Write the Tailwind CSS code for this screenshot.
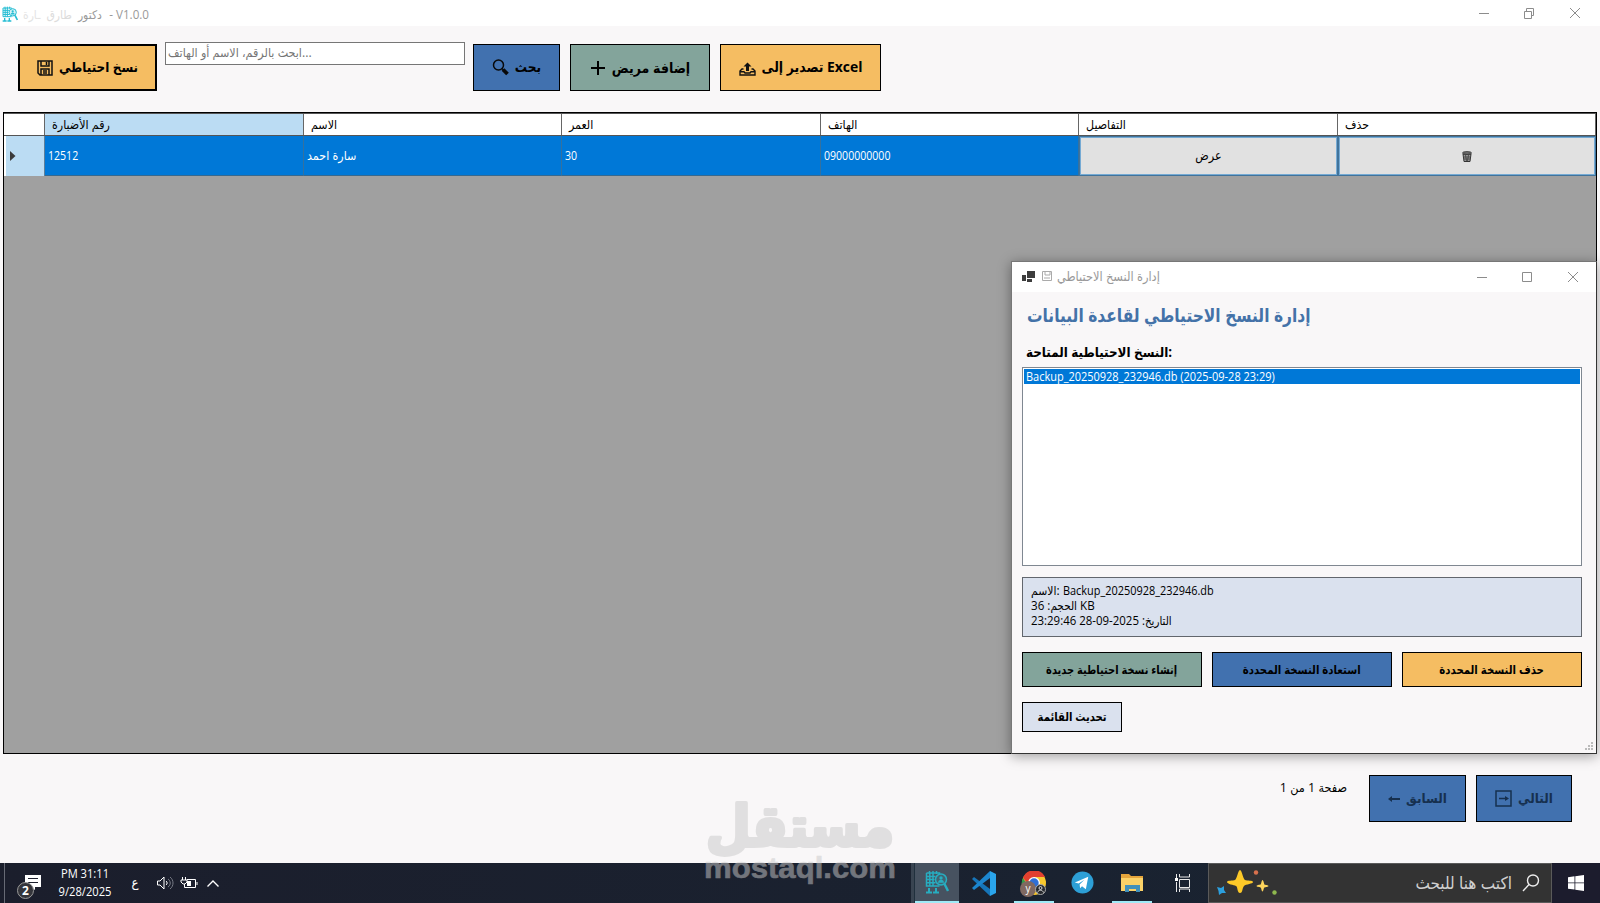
<!DOCTYPE html>
<html lang="ar" dir="ltr">
	<head>
		<meta charset="utf-8" />
		<meta name="viewport" content="width=device-width, initial-scale=1" />
		<script src="https://cdn.jsdelivr.net/npm/@tailwindcss/browser@4"></script>
		<title>V1.0.0</title>
	</head>

	<body
		class="relative flex h-[903px] w-[1600px] flex-col overflow-hidden bg-[#f9f7f8] font-['Open_Sans','DejaVu_Sans_Condensed','DejaVu_Sans',sans-serif] text-[12px] text-black"
	>
		<!-- clinic icon, shared by title bar and taskbar -->
		<svg class="hidden">
			<symbol id="clinic" viewBox="0 0 24 24">
				<path d="M1.500 3h13v1M1.500 3v13h13M4.500 1v3M8 1v3M11.500 1v3M1.500 6.500h9M1.500 9.500h8M1.500 12.700h9M4.800 3v13M8 3v13" fill="none" stroke="currentColor" stroke-width="1.500" />
				<circle cx="16" cy="9.500" r="5.500" fill="currentColor" fill-opacity=".2" stroke="currentColor" stroke-width="1.500" />
				<circle cx="16" cy="8" r="1.700" fill="currentColor" />
				<path d="M13 12.800c0-4 6-4 6 0z" fill="currentColor" />
				<path d="M19.500 14l3.500 7" stroke="currentColor" stroke-width="2.400" />
				<path d="M4 18v4M11 18v4M1 22.500h6M8 22.500h6" stroke="currentColor" stroke-width="2" />
			</symbol>
		</svg>

		<header class="flex h-[26px] shrink-0 items-center bg-white pl-[2px] text-[#999]">
			<svg class="mt-[2px] size-4 text-[#25bdd3]"><use href="#clinic" /></svg>
			<div class="ml-[5px] flex w-[126px] items-center justify-between whitespace-nowrap pt-[3px] text-[12px]">
				<span class="text-[#e4e4e4]">ـارة</span>
				<span class="text-[#dcdcdc]">طارق</span>
				<span>دكتور</span>
				<span class="origin-right scale-x-[.97]">- V1.0.0</span>
			</div>
			<svg class="ml-auto mr-[19px] h-3 w-[102px]" fill="none" stroke="#8c8c8c">
				<path d="M0 6.500h10M45.500 4.500h7v7h-7zM47.500 4V1.500h7v7H53M91 1l10 10M101 1L91 11" />
			</svg>
		</header>

		<section class="flex h-[86px] shrink-0 items-start pl-[18px] pt-4 text-[14px] font-bold">
			<button class="mt-[2px] flex h-[47px] w-[139px] items-center justify-center gap-[6px] border-2 border-black bg-[#f5bd62] text-[13.300px]">
				<svg class="size-4" viewBox="0 0 16 16" fill="none" stroke="#111" stroke-width="1.500">
					<path d="M1 1h14v14H3l-2-2zM4 1v5h8V1M4 15V9h8v6M6 11h4M6 13h4M9.500 2v3" />
				</svg>
				<span class="whitespace-nowrap">نسخ احتياطي</span>
			</button>
			<div class="ml-2 h-[23px] w-[300px] whitespace-nowrap border border-[#767676] bg-white pl-[2px] text-[12.400px] font-normal leading-[20px] text-[#757575]">
				ابحث بالرقم، الاسم أو الهاتف...
			</div>
			<button class="ml-2 mt-[2px] flex h-[47px] w-[87px] items-center justify-center gap-[6px] border border-black bg-[#4171af] text-[13.600px]">
				<svg class="size-[17px]" viewBox="0 0 17 17" fill="none" stroke="#080808">
					<circle cx="6.500" cy="6" r="5" stroke-width="1.500" />
					<path d="M10 9.500l2 2" stroke-width="1.500" />
					<path d="M11 10.500l4.500 4.500" stroke-width="3.800" />
				</svg>
				<span>بحث</span>
			</button>
			<button class="ml-[10px] mt-[2px] flex h-[47px] w-[140px] items-center justify-center gap-[6px] border border-black bg-[#83a49b]">
				<svg class="size-4" stroke="#000" stroke-width="2"><path d="M8 1v14M1 8h14" /></svg>
				<span class="whitespace-nowrap">إضافة مريض</span>
			</button>
			<button class="ml-[10px] mt-[2px] flex h-[47px] w-[161px] items-center justify-center gap-[6px] border border-black bg-[#f5bd62] text-[13.900px]">
				<svg class="h-4 w-[17px]" viewBox="0 0 17 16" fill="none" stroke="#111" stroke-width="1.400">
					<path d="M4.500 9H3l-2 2v4h15v-4l-2-2h-1.500M1 11.800h4l1 1.200h5l1-1.200h4" />
					<path d="M8.500 2.500l4 4H10V11H7V6.500H4.500z" fill="#111" stroke="none" />
				</svg>
				<span class="whitespace-nowrap">تصدير إلى Excel</span>
			</button>
		</section>

		<main class="ml-[3px] flex h-[642px] w-[1594px] shrink-0 flex-col border border-black bg-[#a0a0a0]">
			<div class="grid h-[23px] grid-cols-[41px_259px_258px_259px_258px_259px_258px] border-b border-t border-[#555] bg-white text-[12.300px] leading-[21px]">
				<div class="border-r border-[#666]"></div>
				<div class="border-r border-[#666] bg-[#bbdcf3] pl-[7px]">رقم الأضبارة</div>
				<div class="border-r border-[#666] pl-[7px]">الاسم</div>
				<div class="border-r border-[#666] pl-[7px]">العمر</div>
				<div class="border-r border-[#666] pl-[7px]">الهاتف</div>
				<div class="border-r border-[#666] pl-[7px]">التفاصيل</div>
				<div class="border-r border-[#666] pl-[7px]">حذف</div>
			</div>
			<div class="grid h-[40px] grid-cols-[41px_259px_258px_259px_258px_259px_258px] border-b border-[#37698f] bg-[#0078d7] leading-[40px] text-white">
				<div class="flex items-center border-l-2 border-r border-l-white border-r-[#5e7f9a] bg-[#bbdcf3] pl-[4px]">
					<svg class="h-[10px] w-[6px]"><path d="M0 0l5.500 5-5.500 5z" fill="#3a3a3a" /></svg>
				</div>
				<div class="border-r border-[#34719f] pl-[3px]"><span class="inline-block origin-left scale-x-[.88]">12512</span></div>
				<div class="border-r border-[#34719f] pl-[3px] text-[12.400px]">سارة احمد</div>
				<div class="border-r border-[#34719f] pl-[3px]"><span class="inline-block origin-left scale-x-[.88]">30</span></div>
				<div class="border-r border-[#34719f] pl-[3px]"><span class="inline-block origin-left scale-x-[.88]">09000000000</span></div>
				<div class="border border-[#41749c] text-black">
					<div class="h-full border border-[#75aad4] bg-[#e1e1e1] text-center text-[12.400px] leading-[35px]">عرض</div>
				</div>
				<div class="border border-[#41749c] text-black">
					<div class="flex h-full items-center justify-center border border-[#75aad4] bg-[#e1e1e1]">
						<svg class="h-[11px] w-[10px]" viewBox="0 0 10 11" fill="none" stroke="#333">
							<path d="M1 3l1 7.500h6L9 3z" fill="#999" />
							<path d="M3.500 4l1 6M6.500 4l-1 6M2 6h6M2 8h6" stroke-width=".7" />
							<ellipse cx="5" cy="2" rx="4.500" ry="1.300" fill="#777" />
						</svg>
					</div>
				</div>
			</div>
		</main>

		<footer class="flex h-[109px] shrink-0 items-start justify-end pr-7 pt-[21px]">
			<span class="mr-[22px] mt-[4px] whitespace-nowrap text-[12.500px]">صفحة 1 من 1</span>
			<button class="flex h-[47px] w-[97px] items-center justify-center gap-[6px] border border-black bg-[#4171af] text-[13.400px] font-bold text-[#16304f]">
				<svg class="h-2 w-3" stroke="#16304f" stroke-width="2" fill="#16304f"><path d="M2 4h10" /><path d="M0 4l4-3v6z" stroke="none" /></svg>
				<span>السابق</span>
			</button>
			<button class="ml-[10px] flex h-[47px] w-[96px] items-center justify-center gap-[6px] border border-black bg-[#4171af] text-[13.400px] font-bold text-[#16304f]">
				<svg class="size-[17px]" fill="none" stroke="#16304f" stroke-width="1.500"><path d="M1 1h15v15H1zM4 8.500h8" /><path d="M10 6l4 2.500-4 2.500z" fill="#16304f" stroke="none" /></svg>
				<span>التالي</span>
			</button>
		</footer>

		<!-- taskbar -->
		<nav class="flex h-10 shrink-0 items-stretch bg-gradient-to-r from-[#1b1e2c] to-[#192432] text-white">
			<div class="w-[5px] border-r border-[#676a75]"></div>
			<svg class="ml-[11px] mt-[9px] h-[29px] w-[26px]" viewBox="0 0 26 29">
				<path d="M9 3h16v12H19v3l-4-3H9z" fill="#fff" />
				<path d="M12 6.500h10M12 10.500h10" stroke="#1b1e2c" />
				<circle cx="9.500" cy="18.500" r="8" fill="#34353b" stroke="#9a9a9a" />
				<text x="9.500" y="22.500" font-size="12" font-weight="bold" fill="#fff" text-anchor="middle">2</text>
			</svg>
			<div class="ml-[10px] flex w-[66px] scale-x-[.93] flex-col items-center pt-[2px] text-[12px] leading-[18px]">
				<span>PM 31:11</span>
				<span>9/28/2025</span>
			</div>
			<span class="ml-[7px] w-[20px] self-center text-center text-[13px]">ع</span>
			<svg class="ml-[11px] mt-[13px] h-[14px] w-[65px]" fill="none" stroke="#fff">
				<path d="M1.500 5v4H4l4 4V1L4 5zM10 5c1.500 1 1.500 3 0 4" />
				<path d="M12 3c3 2 3 6 0 8M14 1c4 3 4 9 0 12" stroke="#777b86" />
				<path d="M31 3.500h8.500v8h-11V8M41 6v3M26.500 1v3M29.500 1v3M25 4h6v2l-2 2h-2l-2-2z" />
				<path d="M31 5h4v5h-4z" fill="#fff" stroke="none" />
				<path d="M51.500 10.500L57 5l5.500 5.500" stroke-width="1.400" />
			</svg>
			<div class="ml-[690px] w-[4px] border-r border-[#20303d] bg-[#394451]"></div>
			<div class="flex w-[44px] justify-center border-b-2 border-[#a0eaf7] bg-[#475260] pt-[7px]">
				<svg class="size-6 text-[#27adc0]"><use href="#clinic" /></svg>
			</div>
			<svg class="ml-[13px] mt-[8px] size-[25px]" viewBox="0 0 25 25">
				<path d="M18 0l6 3v19l-6 3L0 8l2-2 5 3z" fill="none" />
				<path d="M0 8l2-2 16 12v7z" fill="#1675b9" />
				<path d="M0 17L18 0v7L2 19z" fill="#1c86cf" />
				<path d="M18 0l6 3v19l-6 3z" fill="#2aa5ec" />
			</svg>
			<div class="ml-[17px] w-10 border-b-2 border-[#a0eaf7] pl-[6px] pt-[8px]">
				<svg class="h-[27px] w-[28px]" viewBox="0 0 28 27">
					<circle cx="14" cy="12" r="12" fill="#f8c82e" />
					<path d="M3 7a12 12 0 0 1 22-1H14l-4 9z" fill="#e2402f" />
					<path d="M3 7l7 11v6A12 12 0 0 1 3 7z" fill="#319b4b" />
					<circle cx="14" cy="12" r="6" fill="#fff" />
					<circle cx="14" cy="12" r="4.700" fill="#2f6fd6" />
					<circle cx="8" cy="18" r="8" fill="#806961" />
					<text x="8" y="21" font-size="10" fill="#fff" text-anchor="middle">y</text>
					<circle cx="20.500" cy="18.500" r="5" fill="#26292e" stroke="#aaa" />
					<circle cx="20.500" cy="17" r="1.500" fill="none" stroke="#ddd" />
					<path d="M17.500 21.500c1-3 5-3 6 0" fill="none" stroke="#ddd" />
				</svg>
			</div>
			<svg class="ml-[17px] mt-[8px] size-[23px]" viewBox="0 0 24 24">
				<circle cx="12" cy="12" r="11.500" fill="#2d9fd6" />
				<path d="M4 12l14-6-2.500 13-4-3-2 2-.5-4 5-5-6 4z" fill="#fff" />
			</svg>
			<div class="ml-[18px] w-10 border-b-2 border-[#a0eaf7] pl-[9px] pt-[10px]">
				<svg class="h-[20px] w-[23px]" viewBox="0 0 23 20">
					<path d="M0 1h8l2 2h12v15H0z" fill="#e5a53c" />
					<path d="M0 5h22v13H0z" fill="#fbd268" />
					<path d="M4 19v-7h15v7h-4v-3H8v3z" fill="#4291bb" />
				</svg>
			</div>
			<svg class="ml-[23px] mt-[11px] h-[18px] w-[18px]" fill="none" stroke="#e8e8e8">
				<path d="M4.500 5.500h10v8h-10zM4.500 0v3h10V0M4.500 18v-3h10v3M1.500 0v4M1.500 8v10" />
				<path d="M0 4h3v3H0zM14 3h3" fill="#fff" stroke="none" />
			</svg>
			<div class="ml-auto flex w-[344px] border border-[#5a5a5a] bg-[#333]">
				<svg class="ml-[8px] mt-[5px] h-[32px] w-[62px]" viewBox="0 0 62 32">
					<path d="M23 1c2 0 3 9 5 10s8 0 8 2-7 2-9 4-1 7-4 7-2-6-4-7-9-2-9-4 6-1 8-2 3-10 5-10z" fill="#fdc928" />
					<path d="M45.500 11c1 0 1.500 4 2 4.500s4 .5 4 1.500-3 1-4 1.500-1 4-2 4-1-3.500-2-4-4-.5-4-1.500 3-1 4-1.500 1-4.500 2-4.500z" fill="#fdd45c" />
					<path d="M0 18l4 1 3-2 0 4 2 3-4 0-3 2-.500-4z" fill="#2c9fdd" />
					<circle cx="39" cy="3.500" r="2.200" fill="#d9714d" />
					<circle cx="57.500" cy="23.500" r="2.200" fill="#8eb84e" />
				</svg>
				<span class="ml-auto self-center whitespace-nowrap text-[17px] text-[#d0d0d0]">اكتب هنا للبحث</span>
				<svg class="ml-[10px] mr-[11px] mt-[10px] size-[18px]" fill="none" stroke="#eee" stroke-width="1.400"><circle cx="11" cy="6.500" r="5.500" /><path d="M7 10.500L1 17" /></svg>
			</div>
			<div class="flex w-[48px] items-center justify-center bg-[#1c1c2d]">
				<svg class="size-4" viewBox="0 0 16 16" fill="#fff"><path d="M0 2.300l6.500-1v6.200H0zM7.300 1.200L16 0v7.500H7.300zM0 8.300h6.500v6.300L0 13.700zM7.300 8.300H16V16l-8.700-1.200z" /></svg>
			</div>
		</nav>

		<!-- backup manager window -->
		<section class="absolute left-[1011px] top-[261px] flex h-[493px] w-[586px] flex-col border border-[#333] border-l-[#777] border-t-[#777] bg-[#f9f7f8] shadow-[0_2px_12px_rgba(0,0,0,0.38)]">
			<div class="flex h-[30px] shrink-0 items-center bg-white pb-px pl-[10px] text-[12.700px] text-[#999]">
				<svg class="h-3 w-[13px]" fill="#3d3d3d"><path d="M5 0h8v7H5zM0 4h4v6H0zM5 8h5v3H5z" /></svg>
				<svg class="ml-[7px] size-[11px]" fill="none" stroke="#aaa"><path d="M.500.500h9v9h-9zM3 1v3h5V1M2 7h6" /></svg>
				<span class="ml-[4px] whitespace-nowrap">إدارة النسخ الاحتياطي</span>
				<svg class="ml-auto mr-[16px] h-3 w-[103px]" fill="none" stroke="#8c8c8c">
					<path d="M0 6.500h10M45.500 1.500h9v9h-9zM91 1l10 10M101 1L91 11" />
				</svg>
			</div>
			<h1 class="ml-[15px] mt-[8px] h-[32px] origin-left scale-x-[.905] whitespace-nowrap text-[19px] font-bold leading-[30px] text-[#4472a8]">إدارة النسخ الاحتياطي لقاعدة البيانات</h1>
			<h2 class="ml-[14px] mt-[10px] h-[25px] whitespace-nowrap text-[13.300px] font-bold leading-[20px]">النسخ الاحتياطية المتاحة:</h2>
			<div class="ml-[10px] h-[199px] w-[560px] shrink-0 border border-[#7f8791] bg-white p-[1px]">
				<div class="h-[15px] bg-[#0078d7] pl-[2px] text-[12px] leading-[15px] text-white">
					<span class="inline-block origin-left scale-x-[.914]">Backup_20250928_232946.db (2025-09-28 23:29)</span>
				</div>
			</div>
			<div class="ml-[10px] mt-[11px] h-[60px] w-[560px] shrink-0 border border-[#62666d] bg-[#dae1ee] pl-[8px] pt-[5px] text-[12px] leading-[15px]">
				<p>الاسم: <span class="inline-block origin-left scale-x-[.91]">Backup_20250928_232946.db</span></p>
				<p class="origin-left scale-x-[.97]">الحجم: 36 KB</p>
				<p class="origin-left scale-x-[.953]">التاريخ: 2025-09-28 23:29:46</p>
			</div>
			<div class="ml-[10px] mt-[15px] flex gap-[10px] text-[12px] font-bold">
				<button class="h-[35px] w-[180px] border border-black bg-[#83a49b]"><span class="inline-block scale-x-[.915]">إنشاء نسخة احتياطية جديدة</span></button>
				<button class="h-[35px] w-[180px] border border-black bg-[#4171af]"><span class="inline-block scale-x-[.94]">استعادة النسخة المحددة</span></button>
				<button class="h-[35px] w-[180px] border border-black bg-[#f5bd62]"><span class="inline-block scale-x-[.94]">حذف النسخة المحددة</span></button>
			</div>
			<button class="ml-[10px] mt-[15px] h-[30px] w-[100px] border border-black bg-[#dae1ee] text-[12px] font-bold"><span class="inline-block scale-x-[.93]">تحديث القائمة</span></button>
			<svg class="absolute bottom-[2px] right-[2px] size-[9px]" fill="#bbb"><path d="M6 0h2v2H6zM3 3h2v2H3zM6 3h2v2H6zM0 6h2v2H0zM3 6h2v2H3zM6 6h2v2H6z" /></svg>
		</section>

		<!-- watermark -->
		<svg class="pointer-events-none absolute left-[700px] top-[780px] h-[110px] w-[200px] overflow-visible opacity-50" fill="#c9c9c9" stroke="#c9c9c9" stroke-linejoin="round">
			<text x="6" y="66" font-size="56" font-weight="bold" stroke-width="4" textLength="188" lengthAdjust="spacingAndGlyphs" font-family="DejaVu Sans">مستقل</text>
			<text x="4" y="98" font-size="30" font-weight="bold" stroke-width=".6" textLength="192" lengthAdjust="spacingAndGlyphs" font-family="Liberation Sans">mostaql.com</text>
		</svg>
	</body>
</html>
